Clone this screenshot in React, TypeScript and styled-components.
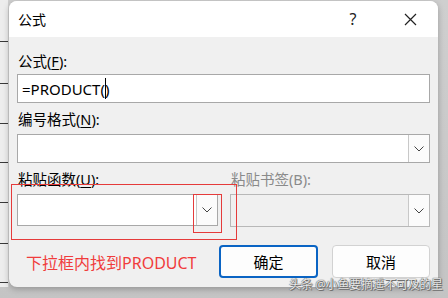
import React from "react";
import styled, { createGlobalStyle } from "styled-components";

const GlobalStyle = createGlobalStyle`
  html, body {
    margin: 0;
    padding: 0;
    width: 448px;
    height: 298px;
    overflow: hidden;
    background: #c9c9c9;
  }
  * { box-sizing: border-box; }
`;

const FONT = `"Noto Sans", "Noto Sans CJK SC", sans-serif`;

const Screen = styled.div`
  position: relative;
  display: flex;
  width: 448px;
  height: 298px;
  font-family: ${FONT};
  background: linear-gradient(#cfcfcf, #c4c4c4);
`;

const SheetEdge = styled.div`
  width: 9px;
  height: 287px;
  background: #ededed;
  border-right: 1px solid #d0d0d0;
  display: flex;
  flex-direction: column;
  padding-top: 1px;
`;

const SheetRow = styled.div<{ $h: number }>`
  height: ${(p) => p.$h}px;
  border-bottom: 1px solid #3a3a3a;
`;

const Dialog = styled.div`
  margin-top: 1px;
  width: 429px;
  height: 286px;
  background: #f0f0f0;
  border-radius: 8px;
  box-shadow: 0 2px 6px rgba(0, 0, 0, 0.25);
  display: flex;
  flex-direction: column;
  overflow: hidden;
`;

const TitleBar = styled.div`
  height: 36px;
  background: #ffffff;
  display: flex;
  align-items: center;
  padding-left: 9px;
  font-size: 14px;
  color: #000;
`;

const Title = styled.div`
  flex: 1;
`;

const TitleButton = styled.div<{ $w: number }>`
  width: ${(p) => p.$w}px;
  display: flex;
  justify-content: center;
  align-items: center;
  font-size: 16px;
  color: #222;
`;

const Body = styled.div`
  padding: 14px 8px 0 8px;
  display: flex;
  flex-direction: column;
`;

const Label = styled.div<{ $disabled?: boolean; $gap?: number }>`
  height: 20px;
  line-height: 20px;
  font-size: 14.5px;
  color: ${(p) => (p.$disabled ? "#8a8a8a" : "#000")};
  margin-bottom: ${(p) => p.$gap ?? 4}px;
  margin-left: 1px;
  white-space: nowrap;
  u { text-underline-offset: 2px; }
`;

const TextBox = styled.div`
  height: 29px;
  background: #fff;
  border: 1px solid #a8a8a8;
  display: flex;
  align-items: center;
  padding-left: 4px;
  font-size: 15px;
  color: #000;
  margin-bottom: 6px;
`;

const Caret = styled.span`
  display: inline-block;
  width: 1px;
  height: 21px;
  background: #000;
  margin: 0 -1px 0 0;
  vertical-align: middle;
`;

const Combo = styled.div<{ $h: number; $disabled?: boolean; $gap?: number }>`
  height: ${(p) => p.$h}px;
  background: ${(p) => (p.$disabled ? "#f0f0f0" : "#fff")};
  border: 1px solid ${(p) => (p.$disabled ? "#b8b8b8" : "#a8a8a8")};
  display: flex;
  justify-content: flex-end;
  margin-bottom: ${(p) => p.$gap ?? 0}px;
`;

const DropButton = styled.div`
  width: 21px;
  height: 100%;
  background: #fbfbfb;
  border-left: 1px solid #c8c8c8;
  display: flex;
  align-items: center;
  justify-content: center;
`;

const Columns = styled.div`
  display: grid;
  grid-template-columns: 201px 1fr;
  column-gap: 12px;
`;

const Field = styled.div`
  position: relative;
`;

const RedBox = styled.div<{ $l: number; $t: number; $w: number; $h: number }>`
  position: absolute;
  left: ${(p) => p.$l}px;
  top: ${(p) => p.$t}px;
  width: ${(p) => p.$w}px;
  height: ${(p) => p.$h}px;
  border: 1.5px solid #e53b3b;
  pointer-events: none;
`;

const BottomRow = styled.div`
  margin-top: 18px;
  display: grid;
  grid-template-columns: 188px 99px 98px;
  column-gap: 14px;
  align-items: center;
`;

const Note = styled.div`
  padding-left: 9px;
  font-size: 16px;
  color: #f03c3c;
  white-space: nowrap;
`;

const Button = styled.div<{ $primary?: boolean }>`
  height: 33px;
  border-radius: 4px;
  background: #fdfdfd;
  border: ${(p) => (p.$primary ? "2px solid #0a64c4" : "1px solid #d2d2d2")};
  display: flex;
  align-items: center;
  justify-content: center;
  font-size: 15px;
  color: #000;
`;

const Watermark = styled.div`
  position: absolute;
  left: 289px;
  top: 275px;
  font-size: 12px;
  letter-spacing: -0.3px;
  color: #e8e8e8;
  white-space: nowrap;
  text-shadow: 0 0 1px #555, 0 0 1px #555, 1px 1px 0 #777;
`;

const Chevron = () => (
  <svg width="10" height="6" viewBox="0 0 10 6">
    <path d="M0.5 0.5 L5 5 L9.5 0.5" fill="none" stroke="#444" strokeWidth="1" />
  </svg>
);

const Close = () => (
  <svg width="13" height="13" viewBox="0 0 13 13">
    <path d="M1 1 L12 12 M12 1 L1 12" stroke="#222" strokeWidth="1.2" />
  </svg>
);

const App = () => {
  return (
    <>
      <GlobalStyle />
      <Screen>
        <SheetEdge>
          {[41, 42, 40, 39, 40, 41, 39].map((h, i) => (
            <SheetRow key={i} $h={h} />
          ))}
        </SheetEdge>
        <Dialog>
          <TitleBar>
            <Title>公式</Title>
            <TitleButton $w={58}>?</TitleButton>
            <TitleButton $w={56}>
              <Close />
            </TitleButton>
          </TitleBar>
          <Body>
            <Label $gap={3}>
              公式(<u>F</u>):
            </Label>
            <TextBox>
              =PRODUCT(
              <Caret />)
            </TextBox>
            <Label $gap={5}>
              编号格式(<u>N</u>):
            </Label>
            <Combo $h={29} $gap={6}>
              <DropButton>
                <Chevron />
              </DropButton>
            </Combo>
            <Columns>
              <Label $gap={5}>
                粘贴函数(<u>U</u>):
              </Label>
              <Label $gap={5} $disabled>
                粘贴书签(B):
              </Label>
              <Field>
                <Combo $h={32}>
                  <DropButton>
                    <Chevron />
                  </DropButton>
                </Combo>
                <RedBox $l={-6} $t={-10} $w={226} $h={56} />
                <RedBox $l={176} $t={0} $w={29} $h={39} />
              </Field>
              <Combo $h={33} $disabled>
                <DropButton>
                  <Chevron />
                </DropButton>
              </Combo>
            </Columns>
            <BottomRow>
              <Note>下拉框内找到PRODUCT</Note>
              <Button $primary>确定</Button>
              <Button>取消</Button>
            </BottomRow>
          </Body>
        </Dialog>
        <Watermark>头条 @小鱼要摘遥不可及的星</Watermark>
      </Screen>
    </>
  );
};

export default App;
